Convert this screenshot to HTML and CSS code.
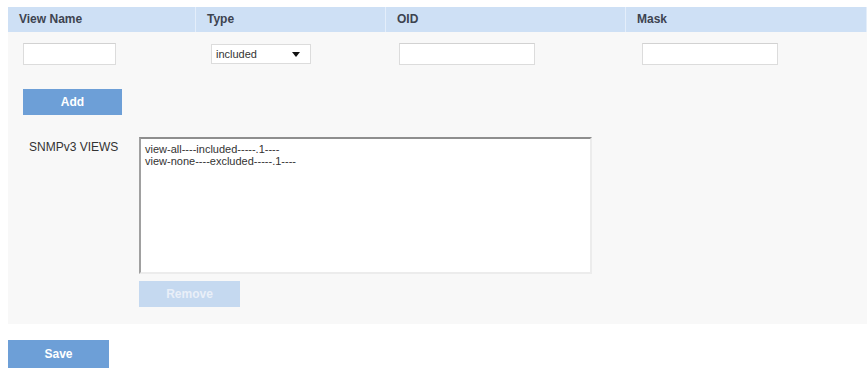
FILE: index.html
```html
<!DOCTYPE html>
<html lang="en">
<head>
  <meta charset="UTF-8">
  <title>SNMPv3 Views</title>
  <link rel="stylesheet" href="styles.css">
</head>
<body>
  <div class="views-table">
    <div class="table-head">
      <div class="col col-name">View Name</div>
      <div class="col col-type">Type</div>
      <div class="col col-oid">OID</div>
      <div class="col col-mask">Mask</div>
    </div>

    <div class="panel">
      <div class="input-row">
        <div class="col col-name"><input type="text" class="field field-name"></div>
        <div class="col col-type">
          <div class="select-box">
            <span>included</span>
            <svg class="select-arrow" width="8" height="5" viewBox="0 0 8 5"><path d="M0 0H8L4 5Z" fill="#111"/></svg>
          </div>
        </div>
        <div class="col col-oid"><input type="text" class="field field-wide"></div>
        <div class="col col-mask"><input type="text" class="field field-wide"></div>
      </div>

      <button class="btn btn-add">Add</button>

      <div class="views-row">
        <div class="views-label">SNMPv3 VIEWS</div>
        <div class="views-box">
          <div class="views-list">
            <div class="views-item">view-all----included-----.1----</div>
            <div class="views-item">view-none----excluded-----.1----</div>
          </div>
          <button class="btn btn-remove" disabled>Remove</button>
        </div>
      </div>
    </div>
  </div>

  <button class="btn btn-save">Save</button>
</body>
</html>
```

FILE: styles.css
```css
* {
  margin: 0;
  padding: 0;
  box-sizing: border-box;
}

body {
  font-family: "Liberation Sans", Arial, sans-serif;
  color: #333;
  background: #fff;
  padding: 7px 0 0 8px;
  width: 867px;
  overflow: hidden;
}

.table-head {
  display: flex;
  height: 25px;
  background: #cee0f5;
}

.table-head .col {
  font-size: 12px;
  font-weight: bold;
  color: #3d4350;
  line-height: 25px;
  padding-left: 11px;
  border-right: 1px solid #e4eefa;
}

.col-name { width: 188px; }
.col-type { width: 190px; }
.col-oid { width: 240px; }
.col-mask { flex: 1; }

.panel {
  background: #f8f8f8;
  height: 292px;
  padding-top: 11px;
}

.input-row {
  display: flex;
  height: 22px;
}

.input-row .col {
  padding-left: 15px;
}

.input-row .col-oid {
  padding-left: 13px;
}

.input-row .col-mask {
  padding-left: 16px;
}

.field {
  height: 22px;
  border: 1px solid #dcdcdc;
  border-top-color: #d2d2d2;
  background: #fff;
  outline: none;
}

.field-name { width: 93px; }
.field-wide { width: 136px; }

.select-box {
  margin-top: 1px;
  width: 100px;
  height: 20px;
  border: 1px solid #dcdcdc;
  background: #fff;
  display: flex;
  align-items: center;
  justify-content: space-between;
  padding: 0 10px 0 4px;
  font-size: 11px;
  color: #333;
}

.btn {
  display: block;
  border: none;
  font-family: inherit;
  font-size: 12px;
  font-weight: bold;
  color: #fff;
  background: #6d9fd7;
  cursor: pointer;
}

.btn-add {
  margin: 24px 0 0 15px;
  width: 99px;
  height: 26px;
}

.views-row {
  display: flex;
  margin-top: 22px;
}

.views-label {
  width: 131px;
  padding: 3px 0 0 21px;
  font-size: 12px;
  color: #333;
}

.views-list {
  width: 453px;
  height: 137px;
  background: #fff;
  border-top: 2px solid #8e8e8e;
  border-left: 2px solid #a0a0a0;
  border-right: 2px solid #ececec;
  border-bottom: 2px solid #ececec;
  padding: 4px 4px;
  font-size: 11px;
  line-height: 12px;
  color: #333;
}

.btn-remove {
  margin-top: 7px;
  width: 101px;
  height: 26px;
  background: #c5d9f0;
  color: #e9eff8;
  cursor: default;
}

.btn-save {
  margin-top: 16px;
  width: 101px;
  height: 28px;
}
```
